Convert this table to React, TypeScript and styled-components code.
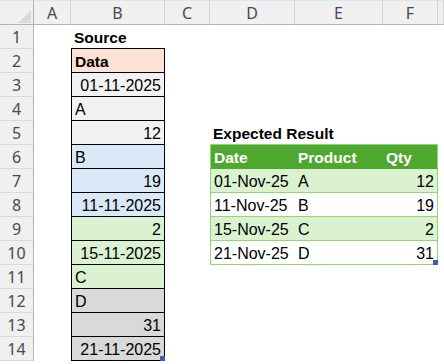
import React from "react";
import styled, { createGlobalStyle } from "styled-components";

const GlobalStyle = createGlobalStyle`
  html, body {
    margin: 0;
    padding: 0;
    background: #ffffff;
  }
  #root {
    width: 444px;
    height: 364px;
    overflow: hidden;
  }
`;

const BLACK = "#000000";
const TABLE_LINE = "#8ed973";
const TABLE_HEAD = "#4ea72e";
const BAND = "#daf2d0";

const Sheet = styled.div`
  display: grid;
  grid-template-columns: 34px 37px 94px 45px 85px 88px 55px 1fr;
  grid-template-rows: 25px repeat(14, 24px);
  width: 444px;
  font-family: "Liberation Sans", Arial, sans-serif;
`;

const Corner = styled.div`
  position: relative;
  box-sizing: border-box;
  background: #f0f0f0;
  border-top: 1px solid #dbe8eb;
  border-right: 1px solid #b4b4b4;
  border-bottom: 1px solid #b4b4b4;

  svg {
    position: absolute;
    right: 2px;
    bottom: 1px;
  }
`;

const ColHead = styled.div`
  box-sizing: border-box;
  display: flex;
  align-items: center;
  justify-content: center;
  background: #f0f0f0;
  border-top: 1px solid #dbe8eb;
  border-right: 1px solid #d4d4d4;
  border-bottom: 1px solid #b4b4b4;
  font: 400 16px "Noto Sans", "Open Sans", sans-serif;
  color: #444a55;
`;

const RowHead = styled.div`
  box-sizing: border-box;
  display: flex;
  align-items: center;
  justify-content: center;
  background: #f0f0f0;
  border-right: 1px solid #b4b4b4;
  border-bottom: 1px solid #d9d9d9;
  font: 400 16px "Noto Sans", "Open Sans", sans-serif;
  color: #444a55;
`;

type Edge = string | undefined;

const Cell = styled.div<{
  $fill?: string;
  $right?: boolean;
  $bold?: boolean;
  $ink?: string;
  $lineB?: Edge;
  $lineL?: Edge;
  $lineR?: Edge;
}>`
  position: relative;
  box-sizing: border-box;
  display: flex;
  align-items: flex-end;
  justify-content: ${(p) => (p.$right ? "flex-end" : "flex-start")};
  padding: 0 3px 1px;
  background: ${(p) => p.$fill ?? "transparent"};
  border-bottom: 1px solid ${(p) => p.$lineB ?? "transparent"};
  border-left: ${(p) => (p.$lineL ? `1px solid ${p.$lineL}` : "none")};
  border-right: ${(p) => (p.$lineR ? `1px solid ${p.$lineR}` : "none")};
  white-space: nowrap;
  line-height: 18px;
  font-size: ${(p) => (p.$bold ? "15.5px" : "16px")};
  font-weight: ${(p) => (p.$bold ? 700 : 400)};
  color: ${(p) => p.$ink ?? "#000000"};
`;

// little square at the corner of a table range
const Handle = styled.span`
  position: absolute;
  right: -1px;
  bottom: -1px;
  width: 5px;
  height: 5px;
  background: #3f5bb0;
`;

type Spec = {
  text?: string;
  right?: boolean;
  bold?: boolean;
  fill?: string;
  ink?: string;
  lineB?: string;
  lineL?: string;
  lineR?: string;
  handle?: boolean;
};

const source: Record<number, Spec> = {
  1: { text: "Source", bold: true, lineB: BLACK },
  2: { text: "Data", bold: true, fill: "#fbe2d5" },
  3: { text: "01-11-2025", right: true, fill: "#f2f2f2" },
  4: { text: "A", fill: "#f2f2f2" },
  5: { text: "12", right: true, fill: "#f2f2f2" },
  6: { text: "B", fill: "#dae9f8" },
  7: { text: "19", right: true, fill: "#dae9f8" },
  8: { text: "11-11-2025", right: true, fill: "#dae9f8" },
  9: { text: "2", right: true, fill: "#daf2d0" },
  10: { text: "15-11-2025", right: true, fill: "#daf2d0" },
  11: { text: "C", fill: "#daf2d0" },
  12: { text: "D", fill: "#d9d9d9" },
  13: { text: "31", right: true, fill: "#d9d9d9" },
  14: { text: "21-11-2025", right: true, fill: "#d9d9d9", handle: true },
};

const results = [
  ["01-Nov-25", "A", "12"],
  ["11-Nov-25", "B", "19"],
  ["15-Nov-25", "C", "2"],
  ["21-Nov-25", "D", "31"],
];

function specFor(row: number, col: number): Spec {
  // column B: boxed source list
  if (col === 1) {
    const s = source[row];
    if (row === 1) return s;
    return { ...s, lineB: BLACK, lineL: BLACK, lineR: BLACK };
  }

  // columns D..F: result table
  if (col >= 3 && col <= 5) {
    const k = col - 3;
    const sides = {
      lineL: k === 0 ? TABLE_LINE : undefined,
      lineR: k === 2 ? TABLE_LINE : undefined,
    };
    if (row === 5) {
      return {
        text: k === 0 ? "Expected Result" : undefined,
        bold: true,
        lineB: TABLE_LINE,
      };
    }
    if (row === 6) {
      return {
        text: ["Date", "Product", "Qty"][k],
        bold: true,
        ink: "#ffffff",
        fill: TABLE_HEAD,
        lineB: TABLE_HEAD,
        ...sides,
      };
    }
    if (row >= 7 && row <= 10) {
      const i = row - 7;
      return {
        text: results[i][k],
        right: k === 2,
        fill: i % 2 === 0 ? BAND : "#ffffff",
        lineB: TABLE_LINE,
        handle: row === 10 && k === 2,
        ...sides,
      };
    }
  }
  return {};
}

const letters = ["A", "B", "C", "D", "E", "F", ""];
const rows = Array.from({ length: 14 }, (_, i) => i + 1);

export default function App() {
  return (
    <>
      <GlobalStyle />
      <Sheet>
        <Corner>
          <svg width="13" height="13" viewBox="0 0 13 13">
            <polygon points="13,0 13,13 0,13" fill="#dadada" />
          </svg>
        </Corner>
        {letters.map((l, i) => (
          <ColHead key={`h${i}`}>{l}</ColHead>
        ))}

        {rows.map((r) => (
          <React.Fragment key={r}>
            <RowHead>{r}</RowHead>
            {letters.map((_, c) => {
              const s = specFor(r, c);
              return (
                <Cell
                  key={c}
                  $fill={s.fill}
                  $right={s.right}
                  $bold={s.bold}
                  $ink={s.ink}
                  $lineB={s.lineB}
                  $lineL={s.lineL}
                  $lineR={s.lineR}
                >
                  {s.text}
                  {s.handle && <Handle />}
                </Cell>
              );
            })}
          </React.Fragment>
        ))}
      </Sheet>
    </>
  );
}
